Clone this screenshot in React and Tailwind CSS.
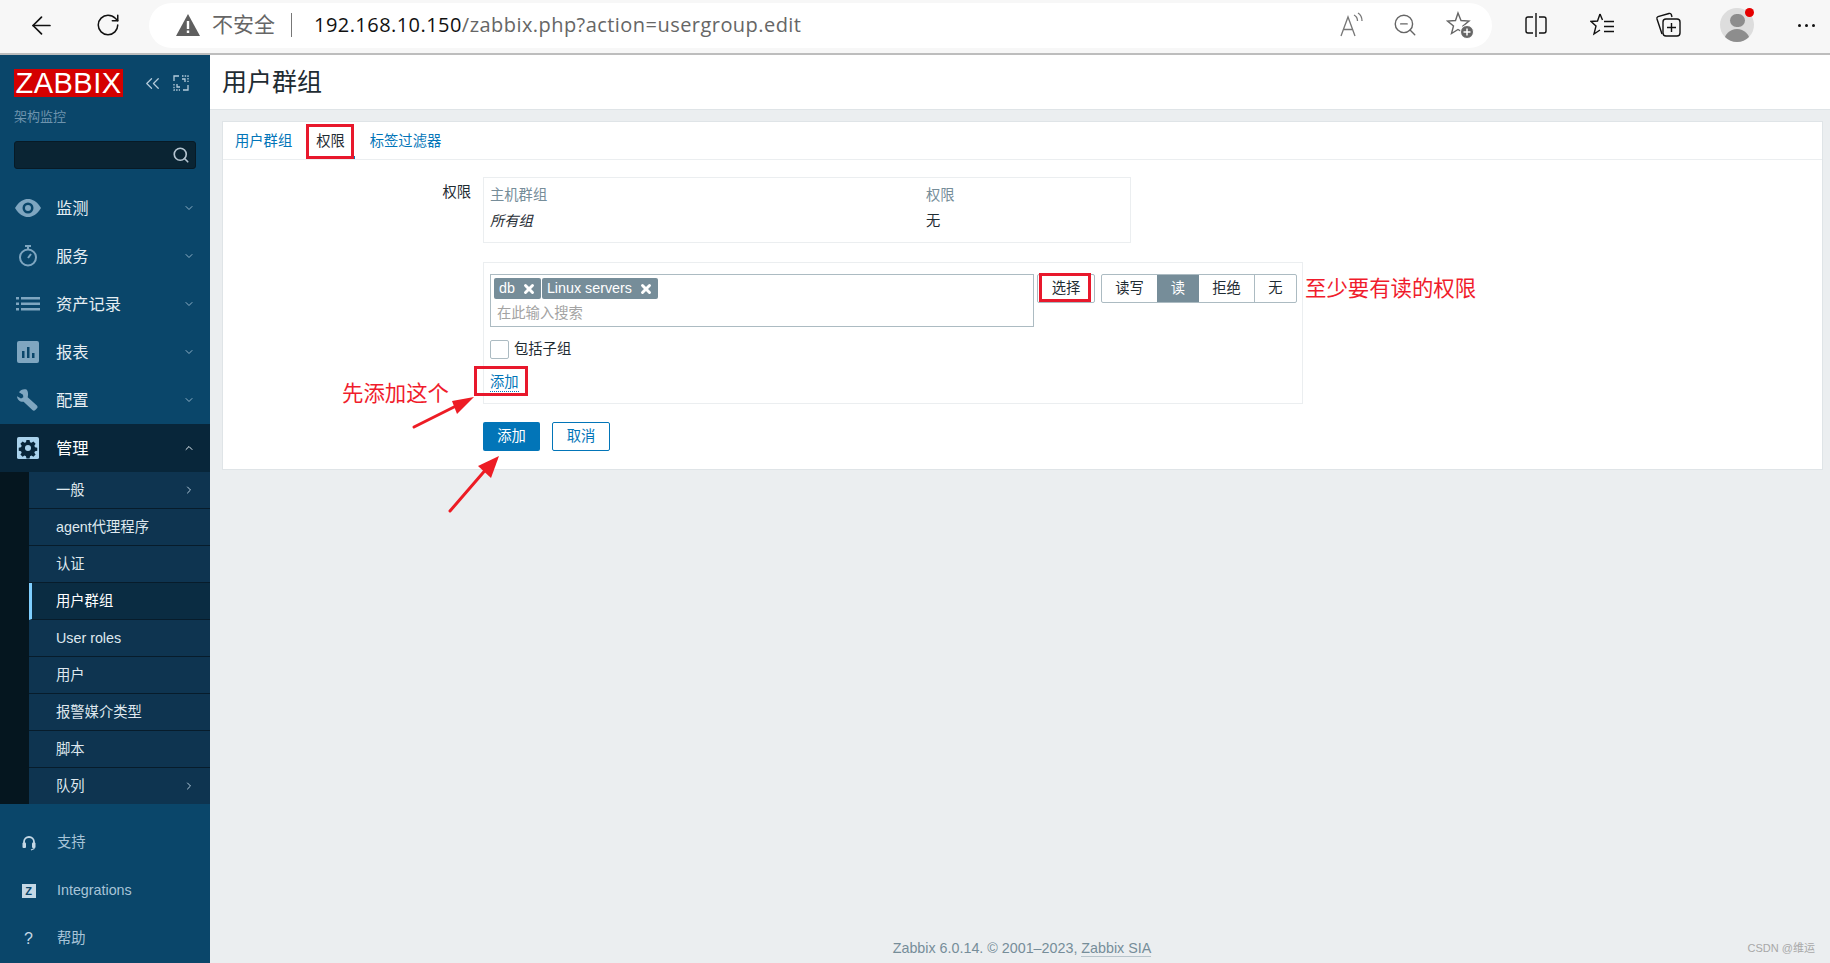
import React from 'react';
import { ArrowLeft, RotateCw, ChevronDown, ChevronUp, ChevronRight, X, Search, ZoomOut, ChevronsLeft } from 'lucide-react';

const mainMenu = [
  { label: '监测', icon: 'eye' },
  { label: '服务', icon: 'timer' },
  { label: '资产记录', icon: 'list' },
  { label: '报表', icon: 'chart' },
  { label: '配置', icon: 'wrench' },
];

const subMenu = [
  { label: '一般', arrow: true },
  { label: 'agent代理程序' },
  { label: '认证' },
  { label: '用户群组', active: true },
  { label: 'User roles' },
  { label: '用户' },
  { label: '报警媒介类型' },
  { label: '脚本' },
  { label: '队列', arrow: true },
];

const MenuIcon = ({ name }) => {
  const c = '#7fa6c0';
  switch (name) {
    case 'eye':
      return (
        <svg width="28" height="20" viewBox="0 0 28 20">
          <path d="M1 10C5 3.500 9.500 1 14 1s9 2.500 13 9c-4 6.500-8.500 9-13 9S5 16.500 1 10z" fill={c} />
          <circle cx="14" cy="10" r="5.500" fill="#0a466a" />
          <circle cx="14" cy="10" r="3" fill={c} />
        </svg>
      );
    case 'timer':
      return (
        <svg width="22" height="24" viewBox="0 0 22 24" fill="none" stroke={c} strokeWidth="2">
          <circle cx="11" cy="13.500" r="8" />
          <path d="M8 2h6M11 2v3" />
          <path d="M11 14l3-4" />
        </svg>
      );
    case 'list':
      return (
        <svg width="24" height="14" viewBox="0 0 24 14" fill={c}>
          <rect x="0" y="0" width="3" height="2.500" />
          <rect x="5" y="0" width="19" height="2.500" />
          <rect x="0" y="5.500" width="3" height="2.500" />
          <rect x="5" y="5.500" width="19" height="2.500" />
          <rect x="0" y="11" width="3" height="2.500" />
          <rect x="5" y="11" width="19" height="2.500" />
        </svg>
      );
    case 'chart':
      return (
        <svg width="22" height="22" viewBox="0 0 22 22">
          <rect width="22" height="22" rx="2" fill={c} />
          <rect x="5" y="10" width="2.500" height="7" fill="#0a466a" />
          <rect x="10" y="6" width="2.500" height="11" fill="#0a466a" />
          <rect x="15" y="12" width="2.500" height="5" fill="#0a466a" />
        </svg>
      );
    case 'wrench':
      return (
        <svg width="22" height="22" viewBox="0 0 22 22">
          <path d="M8.500 0.500c-3-.8-6 .2-7.500 2.800l4 2.400.3 2.600-2.300 1.300-4-2.300c.2 3.500 3.200 6 6.600 5.500l8.800 8.200c.9.800 2 .9 2.900 0l1.700-1.700c.8-.9.700-2-.1-2.800L9.700 8.200c.6-2.800.5-6-1.200-7.700z" fill={c} transform="translate(1 0)" />
        </svg>
      );
    default:
      return (
        <svg width="22" height="22" viewBox="0 0 24 24">
          <rect width="24" height="24" rx="2" fill="#a9d2ec" />
          <path fill="#08263a" fillRule="evenodd" d="M10.300 3.500h3.400l.5 2.500 1.600.7 2.100-1.400 2.400 2.400-1.400 2.100.7 1.600 2.500.5v3.400l-2.500.5-.7 1.600 1.400 2.100-2.400 2.400-2.100-1.400-1.600.7-.5 2.500h-3.400l-.5-2.500-1.600-.7-2.100 1.400-2.400-2.400 1.400-2.100-.7-1.600-2.500-.5v-3.400l2.500-.5.7-1.600-1.400-2.100 2.400-2.400 2.100 1.400 1.600-.7zM12 9a3.300 3.300 0 100 6.600A3.300 3.300 0 0012 9z" transform="translate(0 -.3)" />
        </svg>
      );
  }
};

const Sidebar = () => (
  <aside className="w-[210px] shrink-0 bg-[#0a466a] flex flex-col">
    <div className="pt-[14px] pl-[14px] pr-[14px]">
      <div className="flex items-center">
        <div className="w-[109px] h-[28px] bg-[#d40000] text-white text-[29px] leading-[28px] text-center font-light tracking-[0.5px]">ZABBIX</div>
        <ChevronsLeft size={23} strokeWidth={1.3} className="ml-[18px] text-[#b4cbdb]" />
        <svg width="16" height="16" viewBox="0 0 16 16" fill="none" stroke="#b4cbdb" strokeWidth="1.300" className="ml-[9px]">
          <path d="M1 6V1h5M15 10v5h-5" />
          <path d="M1 9v6h6M9 1h6v6" strokeDasharray="1.500 1.200" />
          <path d="M9 4h3v3M7 12H4V9" />
        </svg>
      </div>
      <div className="text-[13px] leading-[16px] mt-[12px] text-[#6d93ad]">架构监控</div>
      <div className="mt-[16px] h-[28px] w-[182px] bg-[#0a2433] border border-[#071a26] rounded-[3px] flex items-center justify-end pr-[5px]">
        <Search size={18} strokeWidth={2.2} className="text-[#b4c4d0]" />
      </div>
    </div>

    <nav className="mt-[15px]">
      {mainMenu.map((m) => (
        <div key={m.label} className="h-[48px] flex items-center text-[16.3px] text-[#e6eef3]">
          <div className="w-[56px] flex justify-center pr-[0px]"><MenuIcon name={m.icon} /></div>
          <span className="flex-1 pt-[1px]">{m.label}</span>
          <ChevronDown size={12} className="mr-[15px] text-[#8fb0c6]" />
        </div>
      ))}
      <div className="h-[48px] flex items-center text-[16.3px] text-white bg-[#08263a]">
        <div className="w-[56px] flex justify-center"><MenuIcon name="gear" /></div>
        <span className="flex-1 pt-[1px]">管理</span>
        <ChevronUp size={12} className="mr-[15px] text-[#e6eef3]" />
      </div>
      <div className="h-[332px] flex flex-col bg-[#05161f] pl-[29px]">
        {subMenu.map((s) => (
          <div
            key={s.label}
            className={`flex-1 flex items-center text-[14.3px] border-b border-[#071c2b] last:border-b-0 ${
              s.active ? 'bg-[#0a2c42] border-l-[3px] border-l-[#7fcfff] pl-[24px] text-white' : 'bg-[#0e3450] pl-[27px] text-[#dfe8ee]'
            }`}
          >
            <span className="flex-1 pt-[2px]">{s.label}</span>
            {s.arrow && <ChevronRight size={12} className="mr-[15px] text-[#b4cbdb]" />}
          </div>
        ))}
      </div>
    </nav>

    <div className="flex-1 flex flex-col pt-[15px] text-[14.3px] text-[#a8c4d8]">
      <div className="h-[48px] flex items-center">
        <div className="w-[57px] flex justify-center">
          <svg width="14" height="16" viewBox="0 0 14 16" fill="none" stroke="#c5d8e5" strokeWidth="1.800">
            <path d="M2 10V7a5 5 0 0110 0v3" />
            <rect x="0.500" y="7.500" width="3.500" height="5.500" rx="1" fill="#c5d8e5" strokeWidth="0" />
            <rect x="10" y="7.500" width="3.500" height="5.500" rx="1" fill="#c5d8e5" strokeWidth="0" />
            <path d="M12 12.500v1.200L9 15" strokeWidth="1.200" />
          </svg>
        </div>
        支持
      </div>
      <div className="h-[48px] flex items-center">
        <div className="w-[57px] flex justify-center">
          <div className="w-[14px] h-[14px] bg-[#c5d8e5] text-[#0a466a] text-[11px] leading-[14px] font-bold text-center">Z</div>
        </div>
        Integrations
      </div>
      <div className="h-[48px] flex items-center">
        <div className="w-[57px] flex justify-center text-[#c5d8e5] text-[16px]">?</div>
        帮助
      </div>
    </div>
  </aside>
);

const BrowserBar = () => (
  <header className="h-[55px] shrink-0 pb-[3px] bg-[#f7f7f7] border-b-2 border-[#bdbdbd] flex items-center font-['Open_Sans','Noto_Sans_CJK_SC',sans-serif]">
    <ArrowLeft size={29} strokeWidth={1.4} className="ml-[27px] text-[#111]" />
    <RotateCw size={26} strokeWidth={1.4} className="ml-[39px] text-[#111]" />
    <div className="ml-[28px] w-[1343px] h-[45px] bg-white rounded-[23px] flex items-center">
      <svg width="26" height="24" viewBox="0 0 26 24" className="ml-[26px]">
        <path d="M13 1L25 23H1z" fill="#5f5f5f" />
        <rect x="11.800" y="8" width="2.400" height="8" fill="#fff" />
        <rect x="11.800" y="17.500" width="2.400" height="2.500" fill="#fff" />
      </svg>
      <span className="ml-[11px] text-[21px] text-[#666]">不安全</span>
      <span className="ml-[16px] w-[1px] h-[24px] bg-[#777]" />
      <span className="ml-[22px] text-[20px] whitespace-nowrap tracking-[0.45px] text-[#666]">
        <span className="text-[#111]">192.168.10.150</span>/zabbix.php?action=usergroup.edit
      </span>
      <div className="flex-1 flex items-center justify-end pr-[18px] text-[#666]">
        <svg width="26" height="26" viewBox="0 0 26 26" fill="none" stroke="#777" strokeWidth="1.300" className="mr-[27px]">
          <path d="M2 24L9 5l7 19M4.500 17.500h9" />
          <path d="M15 3c2 1 3.500 3.500 3.500 6M19 1c2.500 1.500 4 4.500 4 8" />
        </svg>
        <ZoomOut size={26} strokeWidth={1.3} className="mr-[28px]" />
        <svg width="28" height="28" viewBox="0 0 28 28" fill="none" stroke="#666" strokeWidth="1.400">
          <path d="M12 2l3 7.500 8 .5-6 5 2 7.500-7-4-6.500 4 2-7.500-6-5 8-.5z" />
          <circle cx="21" cy="21" r="6.500" fill="#666" stroke="#fff" strokeWidth="1" />
          <path d="M21 17.500v7M17.500 21h7" stroke="#fff" strokeWidth="1.500" />
        </svg>
      </div>
    </div>
    <div className="flex-1 flex items-center text-[#111] relative h-full">
      <svg width="24" height="26" viewBox="0 0 24 26" fill="none" stroke="#111" strokeWidth="1.400" className="ml-[32px]">
        <path d="M12 1v24" />
        <path d="M9 5H4a2 2 0 00-2 2v12a2 2 0 002 2h5M15 5h5a2 2 0 012 2v12a2 2 0 01-2 2h-5" />
      </svg>
      <svg width="26" height="26" viewBox="0 0 26 26" fill="none" stroke="#111" strokeWidth="1.400" className="ml-[42px]">
        <path d="M10 2L7.500 9 1 9.500l5 4.500-2 8 6-4" />
        <path d="M10 2l2.500 6M14 9.500h10M14 14.500h10M14 19.500h10" />
      </svg>
      <svg width="28" height="28" viewBox="0 0 28 28" fill="none" stroke="#111" strokeWidth="1.400" className="ml-[38px]">
        <path d="M8 23L3 8c-.3-1 .2-2 1-2.300L15 2.500c1-.3 2 .2 2.300 1L18 6" />
        <rect x="9" y="8" width="17" height="17" rx="3" />
        <path d="M17.500 12v9M13 16.500h9" />
      </svg>
      <div className="ml-[38px] w-[34px] h-[34px] rounded-full bg-[#dddddd] relative overflow-hidden flex flex-col items-center">
        <div className="mt-[6px] w-[15px] h-[16px] rounded-full bg-[#8d8d8d]" />
        <div className="mt-[2px] w-[26px] h-[16px] rounded-t-full bg-[#8d8d8d]" />
      </div>
      <div className="absolute left-[253px] top-[8px] w-[9px] h-[9px] rounded-full bg-[#e60000]" />
      <div className="ml-[44px] flex gap-[4px]">
        <span className="w-[3px] h-[3px] rounded-full bg-[#111]" />
        <span className="w-[3px] h-[3px] rounded-full bg-[#111]" />
        <span className="w-[3px] h-[3px] rounded-full bg-[#111]" />
      </div>
    </div>
  </header>
);

const Chip = ({ children }) => (
  <span className="h-[21px] px-[5px] rounded-[2px] bg-[#768d99] text-white text-[14.3px] leading-[21px] flex items-center">
    {children}
    <X size={14} strokeWidth={5} className="ml-[7px]" />
  </span>
);

const PermissionForm = () => (
  <div className="pt-[17px] pb-[18px] flex relative text-[14.3px] text-[#1f2c33]">
    <div className="w-[249px] pr-[1px] text-right leading-[30px]">权限</div>
    <div className="ml-[11px] flex-1">
      <div className="w-[648px] h-[66px] border border-[#ebeef0] flex flex-col pl-[6px] pt-[5px]">
        <div className="flex h-[26px] items-center text-[#768d99]">
          <span className="w-[436px]">主机群组</span>
          <span>权限</span>
        </div>
        <div className="flex h-[26px] items-center">
          <span className="w-[436px] italic">所有组</span>
          <span>无</span>
        </div>
      </div>

      <div className="mt-[19px] w-[820px] h-[142px] border border-[#ebeef0] pl-[6px] pt-[11px]">
        <div className="flex items-start">
          <div className="w-[544px] h-[53px] border border-[#acbbc2] pl-[3px] pt-[3px]">
            <div className="flex gap-[1px]">
              <Chip>db</Chip>
              <Chip>Linux servers</Chip>
            </div>
            <div className="mt-[3px] ml-[3px] text-[#a3a3a3] leading-[22px]">在此输入搜索</div>
          </div>
          <div className="ml-[3px] w-[58px] h-[29px] border border-[#acbbc2] rounded-[2px] flex items-center justify-center">选择</div>
          <div className="ml-[6px] flex h-[29px] border border-[#acbbc2] rounded-[2px]">
            <div className="w-[55px] flex items-center justify-center">读写</div>
            <div className="w-[42px] flex items-center justify-center bg-[#768d99] text-white">读</div>
            <div className="w-[56px] flex items-center justify-center border-r border-[#acbbc2]">拒绝</div>
            <div className="w-[41px] flex items-center justify-center">无</div>
          </div>
        </div>
        <div className="mt-[12px] flex items-center">
          <span className="w-[19px] h-[19px] border border-[#acbbc2] rounded-[2px]" />
          <span className="ml-[5px]">包括子组</span>
        </div>
        <div className="mt-[12px]">
          <span className="text-[#0275b8] border-b border-dotted border-[#0275b8] leading-[18px] inline-block">添加</span>
        </div>
      </div>

      <div className="mt-[18px] flex gap-[12px]">
        <button className="w-[57px] h-[29px] pt-[1px] bg-[#0275b8] text-white rounded-[2px]">添加</button>
        <button className="w-[58px] h-[29px] pt-[1px] border border-[#0275b8] text-[#0275b8] rounded-[2px]">取消</button>
      </div>
    </div>
  </div>
);

// red marks drawn on top of the screenshot
const Annotations = () => (
  <div className="absolute inset-0 pointer-events-none font-['Noto_Sans_CJK_SC',sans-serif]">
    <div className="absolute left-[306px] top-[124px] w-[48px] h-[35px] border-[3px] border-[#e8182c]" />
    <div className="absolute left-[1039px] top-[273px] w-[52px] h-[29px] border-[3px] border-[#e8182c]" />
    <div className="absolute left-[474px] top-[366px] w-[54px] h-[30px] border-[3px] border-[#e8182c]" />
    <div className="absolute left-[1305px] top-[272px] text-[21.4px] leading-[30px] text-[#f01c2c] whitespace-nowrap">至少要有读的权限</div>
    <div className="absolute left-[342px] top-[377px] text-[21.4px] leading-[30px] text-[#f01c2c] whitespace-nowrap">先添加这个</div>
    <svg className="absolute left-[400px] top-[390px]" width="110" height="125" viewBox="0 0 110 125">
      <path d="M14 37L58 15" stroke="#ed1c24" strokeWidth="3" strokeLinecap="round" />
      <path d="M74 7L57 24 52 11z" fill="#ed1c24" />
      <path d="M50 121L88 77" stroke="#ed1c24" strokeWidth="3" strokeLinecap="round" />
      <path d="M99 66L91 88 78 76z" fill="#ed1c24" />
    </svg>
  </div>
);

export default function App() {
  return (
    <div className="relative w-[1830px] h-[963px] overflow-hidden flex flex-col font-['Liberation_Sans','Noto_Sans_CJK_SC',sans-serif] bg-[#ebeef0]">
      <BrowserBar />
      <div className="flex-1 flex min-h-0">
        <Sidebar />
        <main className="flex-1 flex flex-col min-w-0">
          <div className="h-[55px] pt-[2px] bg-white border-b border-[#dfe4e7] flex items-center pl-[12px] text-[25px] text-[#1f2c33]">用户群组</div>
          <div className="mt-[11px] ml-[12px] mr-[7px] bg-white border border-[#dfe4e7]">
            <div className="h-[38px] border-b border-[#ebeef0] flex text-[14.3px] text-[#0275b8] pl-[12px]">
              <span className="leading-[38px]">用户群组</span>
              <span className="ml-[24px] leading-[38px] text-[#1f2c33] relative">
                权限
                <span className="absolute -left-[9px] -right-[10px] bottom-0 h-[3px] bg-[#0275b8]" />
              </span>
              <span className="ml-[25px] leading-[38px]">标签过滤器</span>
            </div>
            <PermissionForm />
          </div>
          <div className="flex-1" />
          <div className="relative h-[25px] pl-[4px] text-center text-[14.3px] text-[#768d99]">
            Zabbix 6.0.14. © 2001–2023, <span className="border-b border-[#b8c4cb]">Zabbix SIA</span>
            <span className="absolute right-[15px] top-[2px] text-[11px] text-[#a8a8a8]">CSDN @维运</span>
          </div>
        </main>
      </div>
      <Annotations />
    </div>
  );
}
